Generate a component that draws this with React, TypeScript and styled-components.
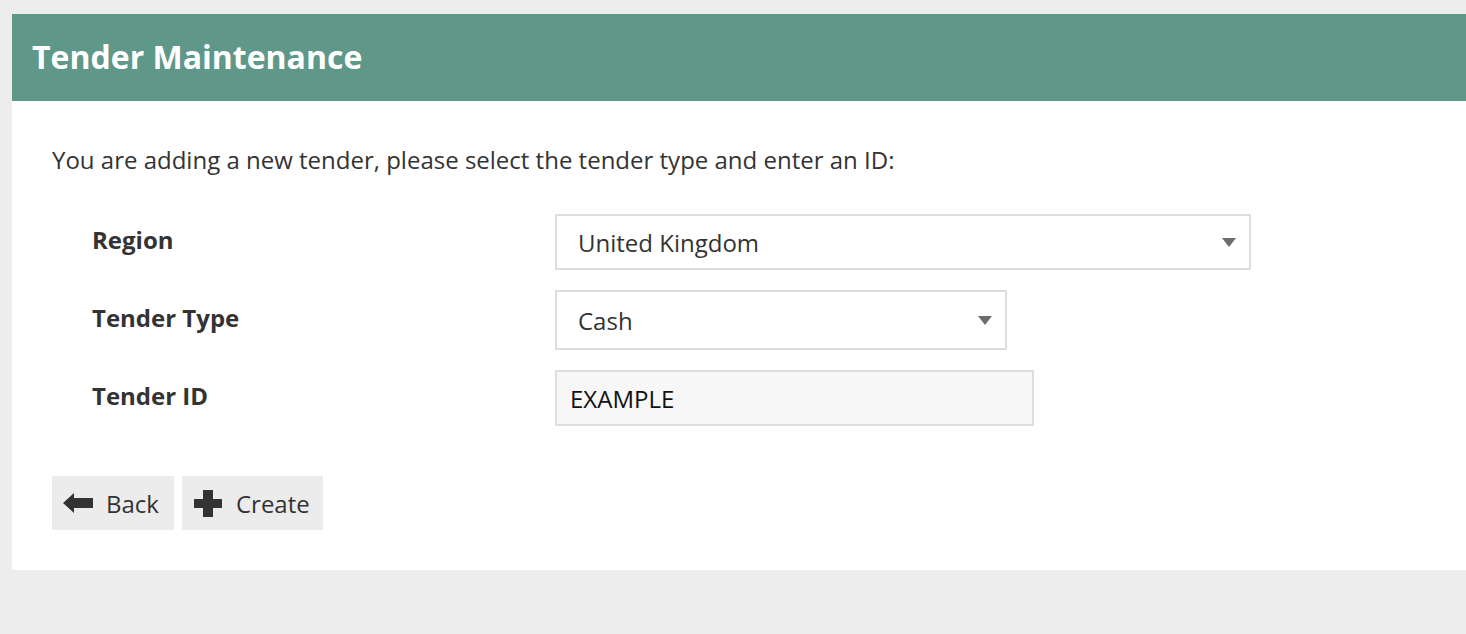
import React from "react";
import styled, { createGlobalStyle } from "styled-components";

const Global = createGlobalStyle`
  html, body { margin: 0; padding: 0; background: #ededed; }
  body { font-family: "Open Sans", "Liberation Sans", sans-serif; color: #333; }
`;

const Page = styled.div`
  padding: 14px 0 0 12px;
  min-height: 634px;
  box-sizing: border-box;
`;

const Card = styled.div`
  background: #fff;
  width: calc(100% + 20px);
`;

const Header = styled.div`
  background: #5f9789;
  height: 87px;
  display: flex;
  align-items: center;
  padding-left: 20px;
`;

const Title = styled.h1`
  margin: 0;
  color: #fff;
  font-size: 32px;
  font-weight: 700;
  line-height: 1;
  padding-bottom: 2px;
`;

const Body = styled.div`
  padding: 43px 40px 40px 40px;
`;

const Intro = styled.p`
  margin: 0 0 38px 0;
  font-size: 24px;
  line-height: 32px;
  color: #333;
`;

const Form = styled.div`
  display: grid;
  grid-template-columns: 463px auto;
  row-gap: 20px;
  padding-left: 40px;
  align-items: center;
`;

const Label = styled.div`
  font-weight: 700;
  font-size: 24px;
  color: #333;
  margin-top: -6px;
`;

const Select = styled.div<{ $w: number; $h: number }>`
  width: ${(p) => p.$w}px;
  height: ${(p) => p.$h}px;
  box-sizing: border-box;
  border: 2px solid #dedede;
  background: #fff;
  display: flex;
  align-items: center;
  justify-content: space-between;
  padding: 0 13px 0 21px;
  font-size: 24px;
  color: #333;
`;

const Caret = styled.span`
  width: 0;
  height: 0;
  border-left: 7px solid transparent;
  border-right: 7px solid transparent;
  border-top: 9px solid #6d6d6d;
`;

const Input = styled.div`
  width: 479px;
  height: 56px;
  box-sizing: border-box;
  border: 2px solid #dedede;
  background: #f7f7f7;
  display: flex;
  align-items: center;
  padding: 0 13px;
  font-size: 24px;
  color: #111;
`;

const Buttons = styled.div`
  display: flex;
  gap: 8px;
  margin-top: 50px;
`;

const Button = styled.div<{ $pl: number; $pr: number; $gap: number }>`
  height: 54px;
  background: #ececec;
  display: flex;
  align-items: center;
  gap: ${(p) => p.$gap}px;
  padding: 0 ${(p) => p.$pr}px 0 ${(p) => p.$pl}px;
  font-size: 24px;
  color: #333;
`;

export default function App() {
  return (
    <>
      <Global />
      <Page>
        <Card>
          <Header>
            <Title>Tender Maintenance</Title>
          </Header>
          <Body>
            <Intro>You are adding a new tender, please select the tender type and enter an ID:</Intro>
            <Form>
              <Label>Region</Label>
              <Select $w={696} $h={56}>
                <span>United Kingdom</span>
                <Caret />
              </Select>
              <Label>Tender Type</Label>
              <Select $w={452} $h={60}>
                <span>Cash</span>
                <Caret />
              </Select>
              <Label>Tender ID</Label>
              <Input>EXAMPLE</Input>
            </Form>
            <Buttons>
              <Button $pl={11} $pr={15} $gap={13}>
                <svg width="30" height="20" viewBox="0 0 30 20">
                  <path d="M0 10 L11 0 L11 5 L30 5 L30 15 L11 15 L11 20 Z" fill="#333" />
                </svg>
                Back
              </Button>
              <Button $pl={12} $pr={13} $gap={14}>
                <svg width="28" height="27" viewBox="0 0 28 27">
                  <path d="M9 0 H19 V9 H28 V18 H19 V27 H9 V18 H0 V9 H9 Z" fill="#333" />
                </svg>
                Create
              </Button>
            </Buttons>
          </Body>
        </Card>
      </Page>
    </>
  );
}
